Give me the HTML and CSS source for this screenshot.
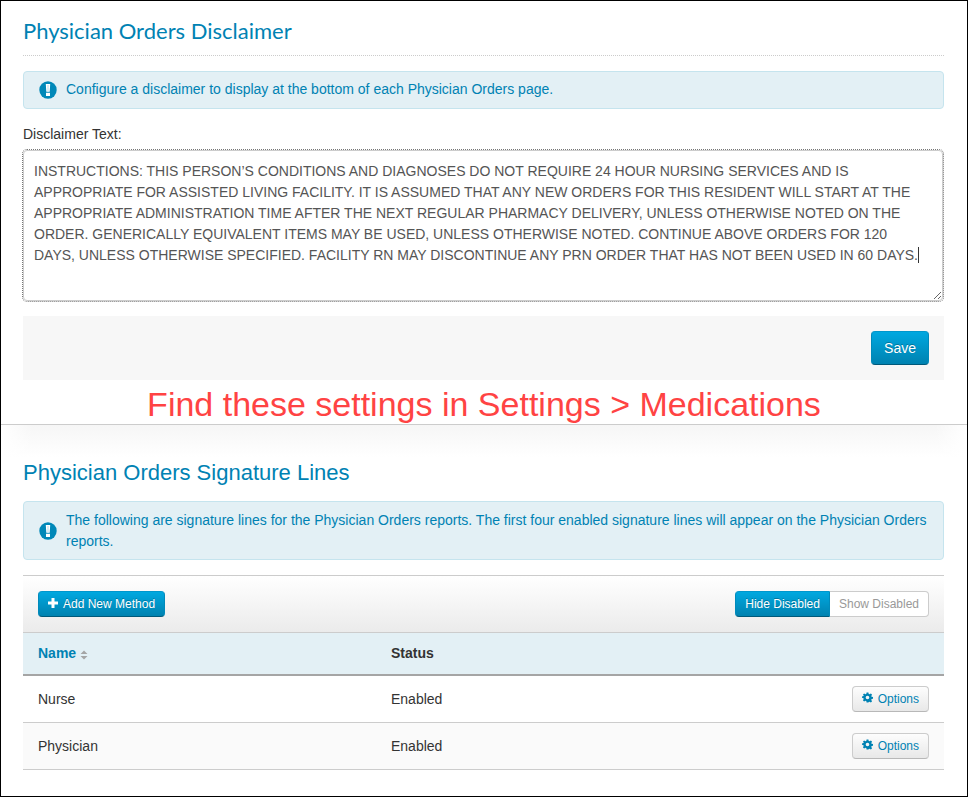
FILE: index.html
```html
<!DOCTYPE html>
<html lang="en">
<head>
  <meta charset="UTF-8">
  <meta name="viewport" content="width=device-width, initial-scale=1.0">
  <title>Physician Orders Settings</title>
  <link rel="stylesheet" href="styles.css">
</head>
<body>
  <svg class="sprite" width="0" height="0" aria-hidden="true">
    <symbol id="icon-alert" viewBox="0 0 18 18">
      <circle cx="9" cy="9" r="8.7" fill="#0088b8"/>
      <path d="M6.800 3h4.400l-.5 7.800H7.300z M7 11.800h4v3.200H7z" fill="#fff"/>
      <path d="M8.500 4h1v6h-1z" fill="#b5dcea"/>
    </symbol>
    <symbol id="icon-plus" viewBox="0 0 10 10">
      <path d="M3.500 0h3v3.500H10v3H6.500V10h-3V6.500H0v-3h3.500z" fill="currentColor"/>
    </symbol>
    <symbol id="icon-cog" viewBox="0 0 24 24">
      <path fill="currentColor" fill-rule="evenodd" d="M10 1h4l.7 3.300 1.800.8 2.900-1.900 2.600 2.700-1.800 2.900.7 1.700 3.300.7v3.600l-3.300.7-.7 1.800 1.800 2.900-2.600 2.600-2.900-1.800-1.800.7L14 23h-4l-.7-3.300-1.800-.7-2.900 1.800L2 18.200l1.800-2.900-.7-1.800L0 12.800V9.700l3.100-1 .7-1.700L2 5.900l2.600-2.700 2.900 1.900 1.800-.8z M12 8a4 4 0 1 0 0 8a4 4 0 1 0 0-8z"/>
    </symbol>
    <symbol id="icon-sort" viewBox="0 0 8 10">
      <path d="M.5 4L4 .5 7.500 4z M.5 6h7L4 9.500z" fill="#a5a5a5"/>
    </symbol>
  </svg>

  <section class="panel">
    <h1 class="title title-lato">Physician Orders Disclaimer</h1>
    <div class="alert">
      <svg class="alert-icon"><use href="#icon-alert"/></svg>
      <p>Configure a disclaimer to display at the bottom of each Physician Orders page.</p>
    </div>
    <form>
      <label class="field-label" for="disclaimer">Disclaimer Text:</label>
      <div class="field">
        <textarea class="disclaimer" id="disclaimer" spellcheck="false">INSTRUCTIONS: THIS PERSON’S CONDITIONS AND DIAGNOSES DO NOT REQUIRE 24 HOUR NURSING SERVICES AND IS APPROPRIATE FOR ASSISTED LIVING FACILITY. IT IS ASSUMED THAT ANY NEW ORDERS FOR THIS RESIDENT WILL START AT THE APPROPRIATE ADMINISTRATION TIME AFTER THE NEXT REGULAR PHARMACY DELIVERY, UNLESS OTHERWISE NOTED ON THE ORDER. GENERICALLY EQUIVALENT ITEMS MAY BE USED, UNLESS OTHERWISE NOTED. CONTINUE ABOVE ORDERS FOR 120 DAYS, UNLESS OTHERWISE SPECIFIED. FACILITY RN MAY DISCONTINUE ANY PRN ORDER THAT HAS NOT BEEN USED IN 60 DAYS.</textarea>
        <span class="caret"></span>
      </div>
      <div class="form-actions">
        <button class="btn btn-primary btn-save" type="button">Save</button>
      </div>
    </form>
  </section>

  <p class="note">Find these settings in Settings &gt; Medications</p>

  <section class="panel panel-lines">
    <h2 class="title">Physician Orders Signature Lines</h2>
    <div class="alert">
      <svg class="alert-icon"><use href="#icon-alert"/></svg>
      <p>The following are signature lines for the Physician Orders reports. The first four enabled signature lines will appear on the Physician Orders reports.</p>
    </div>
    <div class="toolbar">
      <button class="btn btn-primary" type="button"><svg class="icon-plus"><use href="#icon-plus"/></svg>Add New Method</button>
      <div class="btn-group">
        <button class="btn btn-primary" type="button">Hide Disabled</button>
        <button class="btn btn-off" type="button">Show Disabled</button>
      </div>
    </div>
    <table class="grid">
      <thead>
        <tr>
          <th class="col-name"><a href="#">Name<svg class="icon-sort"><use href="#icon-sort"/></svg></a></th>
          <th>Status</th>
          <th></th>
        </tr>
      </thead>
      <tbody>
        <tr>
          <td>Nurse</td>
          <td>Enabled</td>
          <td class="col-options"><button class="btn btn-default" type="button"><svg class="icon-cog"><use href="#icon-cog"/></svg>Options</button></td>
        </tr>
        <tr>
          <td>Physician</td>
          <td>Enabled</td>
          <td class="col-options"><button class="btn btn-default" type="button"><svg class="icon-cog"><use href="#icon-cog"/></svg>Options</button></td>
        </tr>
      </tbody>
    </table>
  </section>

  <script>
    // start with the cursor at the end of the disclaimer
    const box = document.getElementById('disclaimer');
    box.focus();
    box.setSelectionRange(box.value.length, box.value.length);
  </script>
</body>
</html>
```
FILE: styles.css
```css
* {
  box-sizing: border-box;
}
body {
  margin: 0;
  min-height: 100vh;
  border: 1px solid #000;
  background: #fff;
  color: #333;
  font-family: "Liberation Sans", Arial, sans-serif;
  font-size: 14px;
  line-height: 21px;
}
p {
  margin: 0;
}
.sprite {
  position: absolute;
}
.panel {
  padding: 14px 23px 0 22px;
}
.title {
  margin: 0;
  color: #0082b3;
  font-size: 22px;
  font-weight: normal;
  line-height: 32px;
}
.title-lato {
  margin-bottom: 15px;
  padding-bottom: 8px;
  border-bottom: 1px dotted #ccc;
  font-family: Lato, sans-serif;
}
.alert {
  display: flex;
  align-items: center;
  gap: 9px;
  padding: 7px 15px 8px;
  border: 1px solid #c5e4ee;
  border-radius: 4px;
  background: #e3f0f5;
  color: #0082b3;
}
.alert-icon {
  flex: none;
  width: 18px;
  height: 18px;
}
.field-label {
  display: block;
  margin: 15px 0 5px;
}
.field {
  position: relative;
  padding-right: 1px;
}
.disclaimer {
  display: block;
  width: 100%;
  height: 151px;
  padding: 10px 22px 10px 10px;
  border: 1px solid #ccc;
  border-radius: 4px;
  color: #555;
  caret-color: transparent;
  font: inherit;
  resize: vertical;
}
.disclaimer:focus {
  outline: 1px dotted #777;
}
/* steady text cursor, drawn over the field */
.caret {
  position: absolute;
  top: 97px;
  right: 25px;
  width: 1px;
  height: 16px;
  background: #333;
}
.form-actions {
  display: flex;
  justify-content: flex-end;
  margin-top: 15px;
  padding: 15px;
  background: #f7f7f7;
}
.btn {
  height: 26px;
  padding: 0 9px;
  border: 1px solid #ccc;
  border-radius: 4px;
  font-family: inherit;
  font-size: 12px;
  line-height: 18px;
  white-space: nowrap;
  cursor: pointer;
}
.btn-primary {
  border-color: #0097cc #008abb #00597a;
  background: linear-gradient(#00a8e0, #0082b0);
  color: #fff;
  text-shadow: 0 -1px 0 rgba(0, 0, 0, 0.25);
}
.btn-save {
  height: 34px;
  padding: 0 12px;
  font-size: 14px;
}
.btn-default {
  border-color: #ccc #ccc #b8b8b8;
  background: linear-gradient(#fdfdfd, #e8e8e8);
  color: #0082b3;
}
.btn-off {
  background: #fff;
  color: #999;
}
.btn-group {
  display: flex;
}
.btn-group .btn:first-child {
  border-radius: 4px 0 0 4px;
}
.btn-group .btn:last-child {
  border-left: 0;
  border-radius: 0 4px 4px 0;
}
.note {
  padding-top: 5px;
  color: #ff4343;
  font-size: 34px;
  line-height: 39px;
  text-align: center;
}
.panel-lines {
  padding-top: 32px;
  border-top: 1px solid #ccc;
  background:
    linear-gradient(to right, #fff, rgba(255, 255, 255, 0) 32px, rgba(255, 255, 255, 0) calc(100% - 32px), #fff),
    linear-gradient(#f6f6f6, #fff 32px);
}
.panel-lines .title {
  margin-bottom: 12px;
}
.panel-lines .alert {
  padding: 8px 15px 7px;
}
.toolbar {
  display: flex;
  justify-content: space-between;
  margin-top: 15px;
  padding: 15px;
  border: solid #ccc;
  border-width: 1px 0;
  background: linear-gradient(#fff, #ebebeb);
}
.grid {
  width: 100%;
  border-collapse: separate;
  border-spacing: 0;
  table-layout: fixed;
}
.grid th,
.grid td {
  padding: 10px 15px;
  text-align: left;
}
.grid th {
  height: 43px;
  border-bottom: 2px solid #a5a5a5;
  background: #e3f0f5;
}
.grid td {
  height: 47px;
  border-bottom: 1px solid #ccc;
}
.grid tbody tr:nth-child(even) {
  background: #fafafa;
}
.grid a {
  color: #0082b3;
  text-decoration: none;
}
.col-name {
  width: 353px;
}
.grid .col-options {
  text-align: right;
  line-height: 0;
}
.icon-plus {
  width: 10px;
  height: 10px;
  margin-right: 5px;
}
.icon-cog {
  width: 11px;
  height: 11px;
  margin-right: 5px;
}
.icon-sort {
  width: 8px;
  height: 10px;
  margin-left: 4px;
  vertical-align: -2px;
}
```
